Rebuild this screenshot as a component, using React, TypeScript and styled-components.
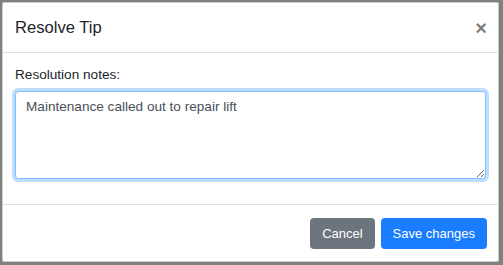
import * as React from 'react';
import styled, { createGlobalStyle } from 'styled-components';

const GlobalStyle = createGlobalStyle`
  html, body {
    margin: 0;
    padding: 0;
    background: #808080;
  }
  body {
    font-family: "Liberation Sans", Arial, sans-serif;
    font-size: 13.6px;
    line-height: 1.5;
    color: #212529;
  }
  * {
    box-sizing: border-box;
  }
`;

const Backdrop = styled.div`
  width: 503px;
  height: 265px;
  padding: 2px 0 0 2px;
`;

const Modal = styled.div`
  display: flex;
  flex-direction: column;
  width: 497px;
  height: 260px;
  background: #fff;
  border: 1px solid rgba(0, 0, 0, 0.2);
  border-radius: 2px;
`;

const Header = styled.div`
  display: flex;
  align-items: center;
  justify-content: space-between;
  height: 50px;
  padding: 0 12px;
  border-bottom: 1px solid #dee2e6;
`;

const Title = styled.h5`
  margin: 0;
  font-size: 16.6px;
  font-weight: 500;
  line-height: 25px;
`;

const Close = styled.button`
  padding: 0;
  margin: 0 -1px 0 0;
  border: 0;
  background: transparent;
  font-family: "Liberation Sans", Arial, sans-serif;
  font-size: 20px;
  font-weight: 700;
  line-height: 1;
  color: #000;
  opacity: 0.5;
  cursor: pointer;
`;

const Body = styled.div`
  padding: 12px;
`;

const FormGroup = styled.div`
  margin-bottom: 13px;
`;

const Label = styled.label`
  display: block;
  margin-bottom: 6px;
  line-height: 20px;
`;

const TextArea = styled.textarea`
  display: block;
  width: 100%;
  height: 88px;
  padding: 5px 10px 4px;
  font-family: "Liberation Sans", Arial, sans-serif;
  font-size: 13.6px;
  line-height: 1.5;
  color: #495057;
  background: #fff;
  border: 1px solid #80bdff;
  border-radius: 3.4px;
  box-shadow: 0 0 0 3px rgba(0, 123, 255, 0.25);
  outline: 0;
`;

const Footer = styled.div`
  display: flex;
  justify-content: flex-end;
  gap: 6px;
  padding: 13px 11px 12px;
  border-top: 1px solid #dee2e6;
`;

const Button = styled.button<{ $variant: 'secondary' | 'primary' }>`
  height: 31px;
  padding: 0 11px;
  font-family: "Liberation Sans", Arial, sans-serif;
  font-size: 13px;
  line-height: 1.5;
  color: #fff;
  border: 1px solid ${(p) => (p.$variant === 'primary' ? '#1a7cff' : '#6c757d')};
  background: ${(p) => (p.$variant === 'primary' ? '#1a7cff' : '#6c757d')};
  border-radius: 3.4px;
  cursor: pointer;
`;

export default function App() {
  const [notes, setNotes] = React.useState('Maintenance called out to repair lift');

  return (
    <>
      <GlobalStyle />
      <Backdrop>
        <Modal>
          <Header>
            <Title>Resolve Tip</Title>
            <Close aria-label="Close">×</Close>
          </Header>
          <Body>
            <FormGroup>
              <Label htmlFor="notes">Resolution notes:</Label>
              <TextArea id="notes" value={notes} onChange={(e) => setNotes(e.target.value)} />
            </FormGroup>
          </Body>
          <Footer>
            <Button $variant="secondary">Cancel</Button>
            <Button $variant="primary">Save changes</Button>
          </Footer>
        </Modal>
      </Backdrop>
    </>
  );
}
